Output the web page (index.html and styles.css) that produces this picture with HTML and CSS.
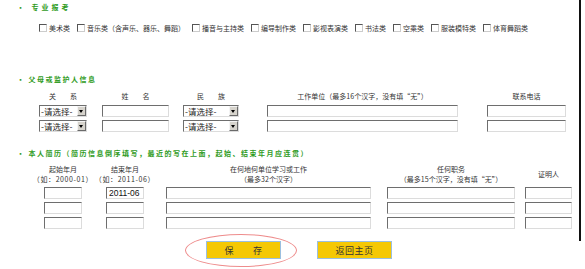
FILE: index.html
```html
<!DOCTYPE html>
<html lang="zh-CN">
<head>
    <meta charset="UTF-8">
    <title>报名信息</title>
    <link rel="stylesheet" href="styles.css">
</head>
<body>
    <div class="page">
        <div class="section-title wide">· 专业报考</div>
        <div class="majors">
            <label class="major"><span class="check"></span>美术类</label>
            <label class="major"><span class="check"></span>音乐类（含声乐、器乐、舞蹈）</label>
            <label class="major"><span class="check"></span>播音与主持类</label>
            <label class="major"><span class="check"></span>编导制作类</label>
            <label class="major"><span class="check"></span>影视表演类</label>
            <label class="major"><span class="check"></span>书法类</label>
            <label class="major"><span class="check"></span>空乘类</label>
            <label class="major"><span class="check"></span>服装模特类</label>
            <label class="major"><span class="check"></span>体育舞蹈类</label>
        </div>

        <div class="section-title gap-parents">· 父母或监护人信息</div>
        <div class="parents">
            <div class="head">关　　系</div>
            <div class="head">姓　　名</div>
            <div class="head">民　　族</div>
            <div class="head">工作单位（最多16个汉字，没有填“无”）</div>
            <div class="head">联系电话</div>

            <div class="select w-rel"><span class="select-text">-请选择-</span><span class="select-btn"></span></div>
            <input class="field w-name" type="text">
            <div class="select w-nation"><span class="select-text">-请选择-</span><span class="select-btn"></span></div>
            <input class="field w-work" type="text">
            <input class="field w-phone" type="text">

            <div class="select w-rel"><span class="select-text">-请选择-</span><span class="select-btn"></span></div>
            <input class="field w-name" type="text">
            <div class="select w-nation"><span class="select-text">-请选择-</span><span class="select-btn"></span></div>
            <input class="field w-work" type="text">
            <input class="field w-phone" type="text">
        </div>

        <div class="section-title gap-resume">· 本人简历（简历信息倒序填写，最近的写在上面，起始、结束年月应连贯）</div>
        <div class="resume">
            <div class="head">起始年月<br><span class="hint">（如：2000-01）</span></div>
            <div class="head">结束年月<br><span class="hint">（如：2011-06）</span></div>
            <div class="head">在何地何单位学习或工作<br>（最多32个汉字）</div>
            <div class="head">任何职务<br>（最多15个汉字，没有填“无”）</div>
            <div class="head">证明人</div>

            <input class="field w-date" type="text">
            <input class="field w-date" type="text" value="2011-06">
            <input class="field w-place" type="text">
            <input class="field w-post" type="text">
            <input class="field w-witness" type="text">

            <input class="field w-date" type="text">
            <input class="field w-date" type="text">
            <input class="field w-place" type="text">
            <input class="field w-post" type="text">
            <input class="field w-witness" type="text">

            <input class="field w-date" type="text">
            <input class="field w-date" type="text">
            <input class="field w-place" type="text">
            <input class="field w-post" type="text">
            <input class="field w-witness" type="text">
        </div>
    </div>

    <div class="actions">
        <span class="mark"></span>
        <button class="btn" type="button">保　　存</button>
        <button class="btn" type="button">返回主页</button>
    </div>
</body>
</html>
```

FILE: styles.css
```css
body {
    margin: 0;
    background: #fff;
    font-family: "Noto Sans CJK SC", "Noto Sans", sans-serif;
    color: #222;
}
.page {
    width: 579px;
    height: 241px;
    border-right: 2px solid #111;
}
.section-title {
    padding-left: 17px;
    height: 14px;
    line-height: 14px;
    font-size: 7px;
    font-weight: bold;
    letter-spacing: 1.5px;
    color: #2f9b1d;
}
.section-title.wide {
    letter-spacing: 3px;
}
.gap-parents {
    margin-top: 37px;
}
.gap-resume {
    margin-top: 14px;
}
.majors {
    display: flex;
    align-items: center;
    gap: 7px;
    margin-top: 7px;
    padding-left: 39px;
    height: 14px;
    font-size: 7px;
    color: #333;
}
.major {
    display: flex;
    align-items: center;
    gap: 2px;
    white-space: nowrap;
}
.check {
    width: 6px;
    height: 6px;
    background: #fff;
    border-top: 1px solid #555;
    border-left: 1px solid #555;
    border-right: 1px solid #ccc;
    border-bottom: 1px solid #ccc;
}
.parents {
    display: grid;
    grid-template-columns: 64px 81px 70px 233px 95px;
    grid-auto-rows: 12px;
    row-gap: 3px;
    justify-items: center;
    align-items: center;
    margin-top: 4px;
    padding-left: 31px;
}
.resume {
    display: grid;
    grid-template-columns: 62px 62px 225px 140px 55px;
    grid-template-rows: 20px;
    grid-auto-rows: 12px;
    row-gap: 3px;
    justify-items: center;
    align-items: center;
    margin-top: 4px;
    padding-left: 32px;
}
.resume .head {
    margin-bottom: 1px;
}
.head {
    font-size: 7px;
    line-height: 10px;
    text-align: center;
    white-space: nowrap;
    color: #333;
}
.hint {
    letter-spacing: 0.6px;
}
.field {
    box-sizing: border-box;
    height: 12px;
    margin: 0;
    padding: 0 2px;
    background: #fff;
    border-top: 1px solid #6e6e6e;
    border-left: 1px solid #6e6e6e;
    border-right: 1px solid #dcdcdc;
    border-bottom: 1px solid #dcdcdc;
    font-family: "Liberation Sans", sans-serif;
    font-size: 8.5px;
    color: #111;
    outline: none;
}
.w-name { width: 67px; }
.w-work { width: 191px; }
.w-phone { width: 79px; }
.w-date { width: 38px; }
.w-place { width: 205px; }
.w-post { width: 128px; }
.w-witness { width: 47px; }
.select {
    box-sizing: border-box;
    display: flex;
    align-items: center;
    height: 12px;
    background: #fff;
    border-top: 1px solid #6e6e6e;
    border-left: 1px solid #6e6e6e;
    border-right: 1px solid #dcdcdc;
    border-bottom: 1px solid #dcdcdc;
}
.w-rel { width: 48px; }
.w-nation { width: 56px; }
.select-text {
    flex: 1;
    padding-left: 1px;
    font-size: 8.5px;
    line-height: 10px;
    color: #222;
    white-space: nowrap;
    overflow: hidden;
}
.select-btn {
    box-sizing: border-box;
    position: relative;
    width: 9px;
    height: 10px;
    background: #d6d3cc;
    border-top: 1px solid #f4f4f4;
    border-left: 1px solid #f4f4f4;
    border-right: 1px solid #6a6a6a;
    border-bottom: 1px solid #6a6a6a;
}
.select-btn::after {
    content: "";
    position: absolute;
    left: 1px;
    top: 3px;
    border-left: 2.5px solid transparent;
    border-right: 2.5px solid transparent;
    border-top: 3px solid #000;
}
.actions {
    position: relative;
    display: flex;
    gap: 36px;
    padding-left: 206px;
    height: 28px;
}
.btn {
    box-sizing: border-box;
    width: 75px;
    height: 18px;
    padding: 0;
    background: #f5c804;
    border: 1px solid #9bbfe0;
    font-family: "Noto Sans CJK SC", sans-serif;
    font-size: 9px;
    color: #333;
    letter-spacing: 0.5px;
}
.mark {
    position: absolute;
    left: 185px;
    top: -7px;
    width: 112px;
    height: 33px;
    box-sizing: border-box;
    border: 1px solid #ee8c8c;
    border-radius: 50%;
}
```
